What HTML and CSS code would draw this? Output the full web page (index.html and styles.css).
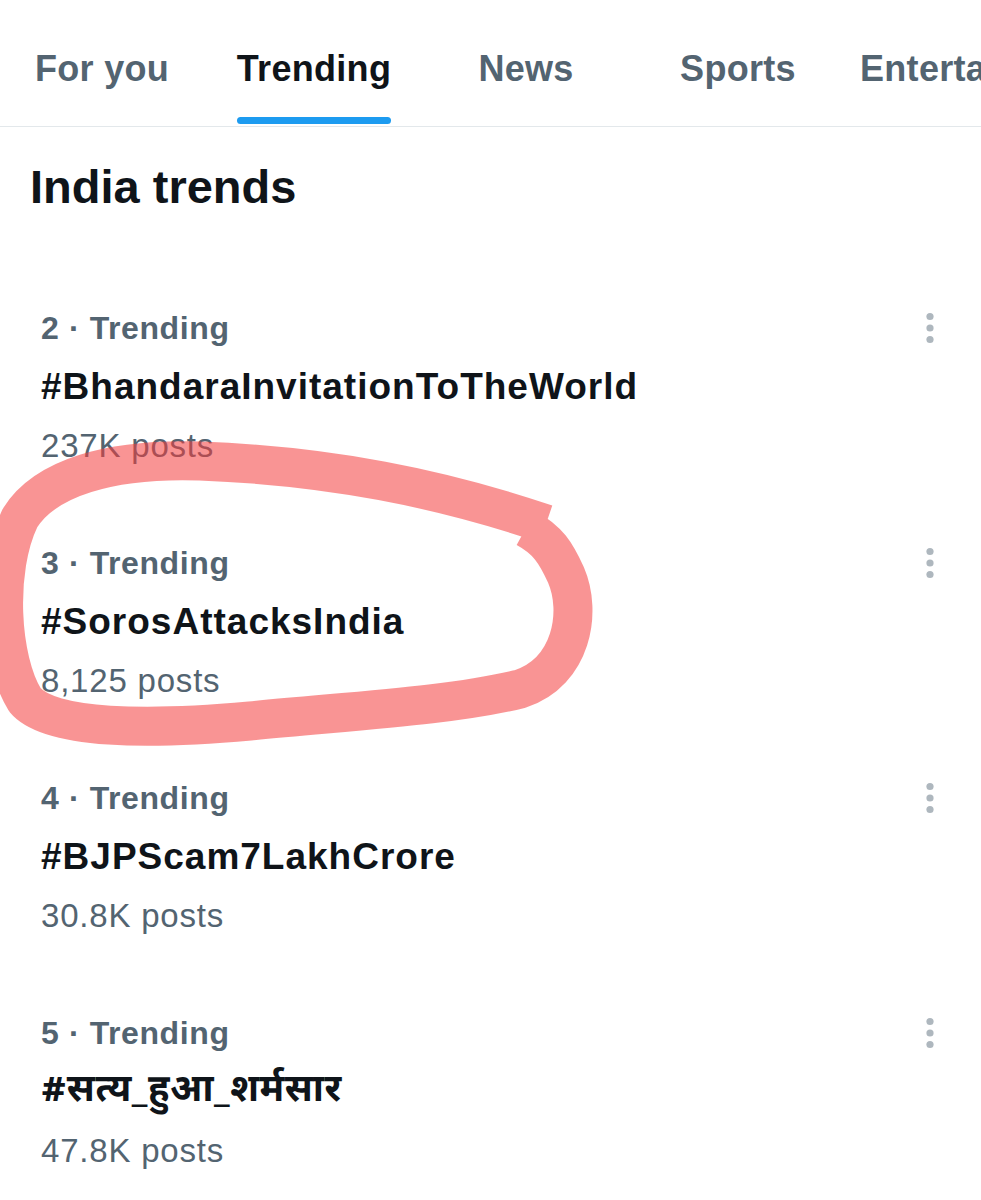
FILE: index.html
```html
<!DOCTYPE html>
<html lang="en">
<head>
<meta charset="utf-8">
<title>Explore - Trending</title>
<link rel="stylesheet" href="styles.css">
</head>
<body>
<div class="page">
  <nav class="tabbar">
    <div class="tabs">
      <div class="tab"><span class="tab-label">For you</span></div>
      <div class="tab active"><span class="tab-label">Trending<span class="indicator"></span></span></div>
      <div class="tab"><span class="tab-label">News</span></div>
      <div class="tab"><span class="tab-label">Sports</span></div>
      <div class="tab"><span class="tab-label">Entertainment</span></div>
    </div>
  </nav>

  <h1 class="section-title">India trends</h1>

  <ul class="trends">
    <li class="trend">
      <div class="trend-head">
        <span class="trend-meta">2 · Trending</span>
        <svg class="more" viewBox="0 0 24 40" width="24" height="40"><circle cx="12" cy="8.5" r="3.6"/><circle cx="12" cy="20" r="3.6"/><circle cx="12" cy="31.5" r="3.6"/></svg>
      </div>
      <div class="trend-name">#BhandaraInvitationToTheWorld</div>
      <div class="trend-count">237K posts</div>
    </li>
    <li class="trend">
      <div class="trend-head">
        <span class="trend-meta">3 · Trending</span>
        <svg class="more" viewBox="0 0 24 40" width="24" height="40"><circle cx="12" cy="8.5" r="3.6"/><circle cx="12" cy="20" r="3.6"/><circle cx="12" cy="31.5" r="3.6"/></svg>
      </div>
      <div class="trend-name">#SorosAttacksIndia</div>
      <div class="trend-count">8,125 posts</div>
    </li>
    <li class="trend">
      <div class="trend-head">
        <span class="trend-meta">4 · Trending</span>
        <svg class="more" viewBox="0 0 24 40" width="24" height="40"><circle cx="12" cy="8.5" r="3.6"/><circle cx="12" cy="20" r="3.6"/><circle cx="12" cy="31.5" r="3.6"/></svg>
      </div>
      <div class="trend-name">#BJPScam7LakhCrore</div>
      <div class="trend-count">30.8K posts</div>
    </li>
    <li class="trend">
      <div class="trend-head">
        <span class="trend-meta">5 · Trending</span>
        <svg class="more" viewBox="0 0 24 40" width="24" height="40"><circle cx="12" cy="8.5" r="3.6"/><circle cx="12" cy="20" r="3.6"/><circle cx="12" cy="31.5" r="3.6"/></svg>
      </div>
      <div class="trend-name hindi">#सत्य_हुआ_शर्मसार</div>
      <div class="trend-count">47.8K posts</div>
    </li>
  </ul>

  <svg class="scribble" viewBox="0 0 981 1200" width="981" height="1200" aria-hidden="true">
    <path d="M 546 524 C 440 488, 330 466, 200 461 C 110 458, 45 478, 20 518 C -5 570, 0 660, 25 700 C 50 730, 150 730, 250 721 C 350 711, 450 706, 520 689 C 572 672, 582 612, 566 575 C 556 553, 548 540, 526 528"/>
  </svg>
</div>
</body>
</html>
```

FILE: styles.css
```css
html, body {
  margin: 0;
  padding: 0;
  background: #ffffff;
}

body {
  font-family: "Liberation Sans", "Noto Sans", "Noto Sans Devanagari", "Lohit Devanagari", "FreeSans", sans-serif;
  color: #0f1419;
  overflow: hidden;
}

.page {
  position: relative;
  width: 981px;
  height: 1200px;
  overflow: hidden;
}

/* ---------- tabs ---------- */
.tabbar {
  border-bottom: 1px solid #e3e8eb;
  height: 126px;
  overflow: hidden;
}

.tabs {
  display: flex;
  margin-left: -4px;
  white-space: nowrap;
}

.tab {
  flex: 0 0 auto;
  min-width: 212px;
  padding: 47px 16px 0;
  box-sizing: border-box;
  display: flex;
  justify-content: center;
  color: #536471;
  font-size: 36px;
  font-weight: 700;
  line-height: 44px;
  letter-spacing: 0.3px;
}

.tab-label {
  display: inline-flex;
  flex-direction: column;
  align-items: stretch;
}

.tab.active {
  color: #0f1419;
}

.indicator {
  display: block;
  height: 7px;
  margin-top: 26px;
  border-radius: 4px;
  background: #1d9bf0;
}

/* ---------- heading ---------- */
.section-title {
  margin: 32px 0 0;
  padding-left: 30px;
  font-size: 47px;
  line-height: 56px;
  font-weight: 700;
  color: #0f1419;
}

/* ---------- trends ---------- */
.trends {
  list-style: none;
  margin: 55px 0 0;
  padding: 0;
}

.trend {
  padding: 38px 39px 39px 41px;
  display: flex;
  flex-direction: column;
}

.trend-head {
  display: flex;
  justify-content: space-between;
  align-items: center;
  height: 40px;
}

.trend-meta {
  font-size: 32px;
  line-height: 40px;
  font-weight: 700;
  letter-spacing: 0.6px;
  color: #536471;
}

.more {
  fill: #aeb7be;
}

.trend-name {
  margin-top: 17px;
  font-size: 37px;
  line-height: 44px;
  font-weight: 700;
  letter-spacing: 1px;
  color: #0f1419;
}

.trend-name.hindi {
  font-family: "Noto Sans Devanagari", "Noto Sans", "Lohit Devanagari", "FreeSans", "Liberation Sans", sans-serif;
  font-size: 38px;
  letter-spacing: 0.5px;
}

.trend-count {
  margin-top: 17px;
  font-size: 33px;
  line-height: 40px;
  font-weight: 400;
  letter-spacing: 0.8px;
  color: #536471;
}

/* ---------- hand-drawn highlight ---------- */
.scribble {
  position: absolute;
  top: 0;
  left: 0;
  pointer-events: none;
}

.scribble path {
  fill: none;
  stroke: #f43c3c;
  stroke-width: 39;
  stroke-linecap: butt;
  stroke-linejoin: round;
  opacity: 0.55;
}
```
